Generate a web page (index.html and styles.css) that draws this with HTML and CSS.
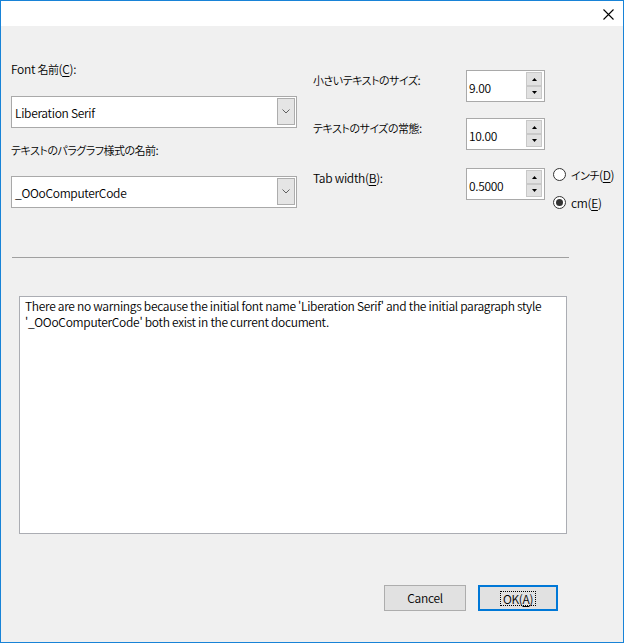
FILE: index.html
```html
<!DOCTYPE html>
<html lang="ja">
<head>
<meta charset="utf-8">
<link rel="stylesheet" href="styles.css">
</head>
<body>
<div class="window">
  <div class="titlebar">
    <svg class="close" width="11" height="11" viewBox="0 0 11 11"><path d="M0.5 0.5 L10.5 10.5 M10.5 0.5 L0.5 10.5" stroke="#000" stroke-width="1.1" fill="none"/></svg>
  </div>
  <div class="body">
    <div class="top">
      <div class="left">
        <div class="label l1">Font <span class="ja">名前</span>(<u>C</u>):</div>
        <div class="combo c1">
          <span class="val">Liberation Serif</span>
          <span class="drop"><svg width="8" height="5" viewBox="0 0 8 5"><path d="M0.5 0.5 L4 4 L7.5 0.5" stroke="#606060" stroke-width="1" fill="none"/></svg></span>
        </div>
        <div class="label l2"><span class="ja">テキストのパラグラフ様式の名前</span>:</div>
        <div class="combo c2">
          <span class="val">_OOoComputerCode</span>
          <span class="drop"><svg width="8" height="5" viewBox="0 0 8 5"><path d="M0.5 0.5 L4 4 L7.5 0.5" stroke="#606060" stroke-width="1" fill="none"/></svg></span>
        </div>
      </div>
      <div class="right">
        <div class="row r1">
          <div class="rlabel"><span class="ja">小さいテキストのサイズ</span>:</div>
          <div class="spin">
            <span class="sval">9.00</span>
            <span class="sbtns">
              <span class="sb up"><svg width="5" height="3" viewBox="0 0 5 3"><path d="M2.5 0 L5 3 L0 3 Z" fill="#000"/></svg></span>
              <span class="sb down"><svg width="5" height="3" viewBox="0 0 5 3"><path d="M0 0 L5 0 L2.5 3 Z" fill="#000"/></svg></span>
            </span>
          </div>
        </div>
        <div class="row r2">
          <div class="rlabel"><span class="ja">テキストのサイズの常態</span>:</div>
          <div class="spin">
            <span class="sval">10.00</span>
            <span class="sbtns">
              <span class="sb up"><svg width="5" height="3" viewBox="0 0 5 3"><path d="M2.5 0 L5 3 L0 3 Z" fill="#000"/></svg></span>
              <span class="sb down"><svg width="5" height="3" viewBox="0 0 5 3"><path d="M0 0 L5 0 L2.5 3 Z" fill="#000"/></svg></span>
            </span>
          </div>
        </div>
        <div class="row r3">
          <div class="rlabel">Tab width(<u>B</u>):</div>
          <div class="spin">
            <span class="sval">0.5000</span>
            <span class="sbtns">
              <span class="sb up"><svg width="5" height="3" viewBox="0 0 5 3"><path d="M2.5 0 L5 3 L0 3 Z" fill="#000"/></svg></span>
              <span class="sb down"><svg width="5" height="3" viewBox="0 0 5 3"><path d="M0 0 L5 0 L2.5 3 Z" fill="#000"/></svg></span>
            </span>
          </div>
          <div class="radios">
            <div class="radio"><span class="circle"></span><span class="rtext"><span class="ja">インチ</span>(<u>D</u>)</span></div>
            <div class="radio r-cm"><span class="circle checked"></span><span class="rtext">cm(<u>E</u>)</span></div>
          </div>
        </div>
      </div>
    </div>
    <div class="sep"></div>
    <div class="msg">There are no warnings because the initial font name 'Liberation Serif' and the initial paragraph style '_OOoComputerCode' both exist in the current document.</div>
    <div class="buttons">
      <div class="btn cancel">Cancel</div>
      <div class="btn ok"><span class="focus">OK(<u>A</u>)</span></div>
    </div>
  </div>
</div>
</body>
</html>
```
FILE: styles.css
```css
* { box-sizing: border-box; }
html, body { margin: 0; padding: 0; }
body {
  font-family: "Noto Sans CJK JP", "Noto Sans", sans-serif;
  font-size: 12px;
  font-weight: 350;
  line-height: 16px;
  letter-spacing: -0.3px;
  color: #000;
  font-feature-settings: "palt";
}
.ja { font-size: 11px; letter-spacing: -0.5px; }
u { text-decoration: underline; text-underline-offset: 2px; }

.window {
  width: 624px;
  height: 643px;
  border: 1px solid #1883d7;
  background: #f0f0f0;
  display: flex;
  flex-direction: column;
  overflow: hidden;
}
.titlebar {
  height: 25px;
  background: #fff;
  display: flex;
  justify-content: flex-end;
  align-items: flex-start;
  padding-right: 9px;
  flex: none;
}
.close { margin-top: 8px; }

.body { display: flex; flex-direction: column; flex: 1; }

.top { display: flex; align-items: flex-start; }
.left {
  margin-left: 10px;
  width: 286px;
  padding-top: 35px;
  display: flex;
  flex-direction: column;
}
.label { height: 16px; white-space: nowrap; }
.l2 { margin-top: 14px; }
.combo {
  height: 32px;
  background: #fff;
  border: 1px solid #a9a9a9;
  display: flex;
  align-items: stretch;
  justify-content: space-between;
}
.c1 { margin-top: 19px; }
.c2 { margin-top: 18px; }
.combo .val { padding-left: 3px; padding-top: 8px; white-space: nowrap; }
.drop {
  width: 18px;
  margin: 1px 1px 2px 0;
  background: #e5e5e5;
  border: 1px solid #adadad;
  display: flex;
  align-items: center;
  justify-content: center;
}

.right {
  margin-left: 16px;
  padding-top: 44px;
  display: flex;
  flex-direction: column;
}
.row { display: flex; align-items: flex-start; height: 32px; }
.r2 { margin-top: 16px; }
.r3 { margin-top: 18px; }
.rlabel { width: 153px; padding-top: 2px; white-space: nowrap; }
.spin {
  width: 79px;
  height: 32px;
  background: #fff;
  border: 1px solid #a9a9a9;
  display: flex;
  justify-content: space-between;
}
.sval { padding-left: 2px; padding-top: 9px; }
.sbtns {
  display: flex;
  flex-direction: column;
  margin: 1px 2px 2px 0;
  width: 16px;
}
.sb {
  background: #e1e1e1;
  border: 1px solid #c8c8c8;
  display: flex;
  align-items: center;
  justify-content: center;
}
.sb.up { height: 14px; }
.sb.down { height: 13px; }

.radios { margin-left: 8px; display: flex; flex-direction: column; }
.radio { display: flex; align-items: center; height: 13px; white-space: nowrap; }
.r-cm { margin-top: 15px; }
.circle {
  width: 13px;
  height: 13px;
  border-radius: 50%;
  border: 1px solid #333;
  background: #fff;
  display: flex;
  align-items: center;
  justify-content: center;
  flex: none;
}
.circle.checked::after {
  content: "";
  width: 7px;
  height: 7px;
  border-radius: 50%;
  background: #333;
}
.rtext { margin-left: 5px; }

.sep {
  margin-top: 49px;
  margin-left: 11px;
  width: 557px;
  height: 1px;
  background: #a0a0a0;
}
.msg {
  margin-top: 38px;
  margin-left: 18px;
  width: 548px;
  height: 238px;
  background: #fff;
  border: 1px solid #abadb3;
  padding: 1px 5px;
}
.buttons {
  margin-top: 51px;
  display: flex;
  justify-content: flex-end;
  padding-right: 65px;
  gap: 12px;
}
.btn {
  height: 26px;
  background: #e1e1e1;
  display: flex;
  align-items: center;
  justify-content: center;
}
.cancel { width: 82px; border: 1px solid #adadad; }
.ok { width: 80px; border: 2px solid #0078d7; }
.focus { border: 1px dotted #000; padding: 0 2px; line-height: 13px; }
```
